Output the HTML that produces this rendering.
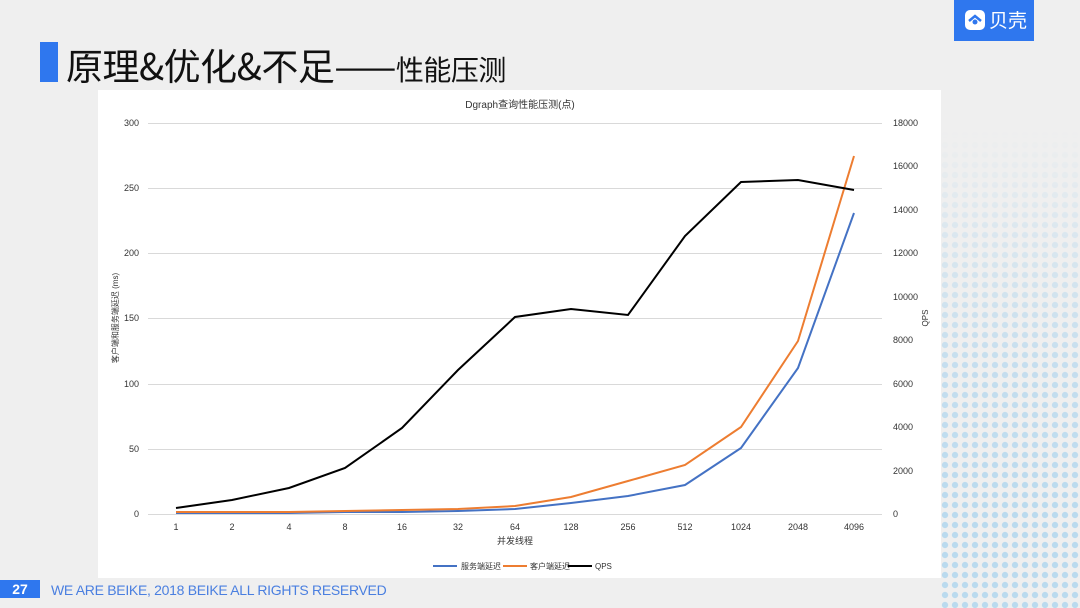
<!DOCTYPE html>
<html><head><meta charset="utf-8"><style>
body{margin:0;width:1080px;height:608px;background:#efefef;position:relative;overflow:hidden;font-family:"Liberation Sans","Noto Sans CJK SC",sans-serif}
.dots{position:absolute;left:940px;top:130px;width:140px;height:478px;opacity:.75;background-image:radial-gradient(circle,#a9d3ee 2.8px,transparent 3.4px);background-size:10px 10px;-webkit-mask-image:linear-gradient(to bottom,transparent 0,rgba(0,0,0,.35) 20%,rgba(0,0,0,.8) 50%,#000 80%);mask-image:linear-gradient(to bottom,transparent 0,rgba(0,0,0,.35) 20%,rgba(0,0,0,.8) 50%,#000 80%)}
.logo{position:absolute;left:954px;top:0;width:80px;height:41px;background:#2f77ee}
.bar{position:absolute;left:40px;top:42px;width:18px;height:40px;background:#2f77ee}
.title{position:absolute;left:66px;top:37px;font-size:37px;color:#111;white-space:nowrap;font-family:"Noto Sans CJK SC",sans-serif;letter-spacing:-0.5px}
.title span{font-size:28px}
.chart{position:absolute;left:98px;top:90px;width:843px;height:488px;background:#fff}
.foot{position:absolute;left:0;top:580px;width:40px;height:18px;background:#2f77ee;color:#fff;font-weight:bold;font-size:14px;text-align:center;line-height:18px}
.ft{position:absolute;left:51px;top:582px;font-size:14px;color:#4a7fe0;letter-spacing:-0.3px}
</style></head><body>
<div class="dots"></div>
<div class="logo">
<svg width="80" height="41"><rect x="11" y="10" width="20" height="20" rx="5" fill="#fff"/><path d="M15 21 L21 16 L27 21" stroke="#2f77ee" stroke-width="2.5" fill="none"/><circle cx="21" cy="22" r="2.5" fill="#2f77ee"/>
<text x="35" y="27" font-size="19" fill="#fff" font-family="Noto Sans CJK SC,sans-serif">贝壳</text></svg></div>
<div class="bar"></div>
<div class="title">原理&amp;优化&amp;不足——<span>性能压测</span></div>
<div class="chart">
<svg width="843" height="488" font-family="Liberation Sans,Noto Sans CJK SC,sans-serif" font-size="9" fill="#333">
<g transform="translate(-98,-90)">
<text x="520" y="108" text-anchor="middle" font-size="10">Dgraph查询性能压测(点)</text>
<g stroke="#d9d9d9" stroke-width="1">
<line x1="148" x2="882" y1="123.5" y2="123.5"/><line x1="148" x2="882" y1="188.5" y2="188.5"/><line x1="148" x2="882" y1="253.5" y2="253.5"/><line x1="148" x2="882" y1="318.5" y2="318.5"/><line x1="148" x2="882" y1="384.5" y2="384.5"/><line x1="148" x2="882" y1="449.5" y2="449.5"/><line x1="148" x2="882" y1="514.5" y2="514.5"/></g>
<g text-anchor="end"><text x="139" y="126">300</text><text x="139" y="191">250</text><text x="139" y="256">200</text><text x="139" y="321">150</text><text x="139" y="387">100</text><text x="139" y="452">50</text><text x="139" y="517">0</text></g>
<g text-anchor="start"><text x="893" y="126">18000</text><text x="893" y="169">16000</text><text x="893" y="213">14000</text><text x="893" y="256">12000</text><text x="893" y="300">10000</text><text x="893" y="343">8000</text><text x="893" y="387">6000</text><text x="893" y="430">4000</text><text x="893" y="474">2000</text><text x="893" y="517">0</text></g>
<g text-anchor="middle"><text x="176" y="530">1</text><text x="232" y="530">2</text><text x="289" y="530">4</text><text x="345" y="530">8</text><text x="402" y="530">16</text><text x="458" y="530">32</text><text x="515" y="530">64</text><text x="571" y="530">128</text><text x="628" y="530">256</text><text x="685" y="530">512</text><text x="741" y="530">1024</text><text x="798" y="530">2048</text><text x="854" y="530">4096</text>
<text x="515" y="544">并发线程</text></g>
<text transform="translate(118,318) rotate(-90)" text-anchor="middle" font-size="8">客户端和服务端延迟 (ms)</text>
<text transform="translate(928,318) rotate(-90)" text-anchor="middle" font-size="8">QPS</text>
<polyline fill="none" stroke="#4472c4" stroke-width="2" points="176,513 232,513 289,513 345,512 402,512 458,511 515,509 571,503 628,496 685,485 741,448 798,368 854,213"/>
<polyline fill="none" stroke="#ed7d31" stroke-width="2" points="176,512 232,512 289,512 345,511 402,510 458,509 515,506 571,497 628,481 685,465 741,427 798,341 854,156"/>
<polyline fill="none" stroke="#000" stroke-width="2" points="176,508 232,500 289,488 345,468 402,428 458,370 515,317 571,309 628,315 685,236 741,182 798,180 854,190"/>
<line x1="433" x2="457" y1="566" y2="566" stroke="#4472c4" stroke-width="2"/><text x="461" y="569" font-size="8">服务端延迟</text>
<line x1="503" x2="527" y1="566" y2="566" stroke="#ed7d31" stroke-width="2"/><text x="530" y="569" font-size="8">客户端延迟</text>
<line x1="568" x2="592" y1="566" y2="566" stroke="#000" stroke-width="2"/><text x="595" y="569" font-size="8">QPS</text>
</g></svg></div>
<div class="foot">27</div>
<div class="ft">WE ARE BEIKE, 2018 BEIKE ALL RIGHTS RESERVED</div>
</body></html>
